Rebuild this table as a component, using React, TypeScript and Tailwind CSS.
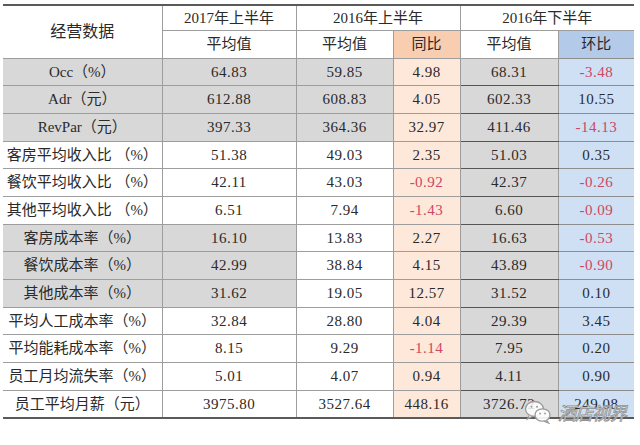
import React from 'react';

type Row = {
    label: string;
    v2017: string;
    v2016a: string;
    yoy: string;
    v2016b: string;
    qoq: string;
    shade: 'top' | 'mid' | 'none';
};

const rows: Row[] = [
    { label: 'Occ（%）', v2017: '64.83', v2016a: '59.85', yoy: '4.98', v2016b: '68.31', qoq: '-3.48', shade: 'top' },
    { label: 'Adr（元）', v2017: '612.88', v2016a: '608.83', yoy: '4.05', v2016b: '602.33', qoq: '10.55', shade: 'top' },
    { label: 'RevPar（元）', v2017: '397.33', v2016a: '364.36', yoy: '32.97', v2016b: '411.46', qoq: '-14.13', shade: 'top' },
    { label: '客房平均收入比 （%）', v2017: '51.38', v2016a: '49.03', yoy: '2.35', v2016b: '51.03', qoq: '0.35', shade: 'none' },
    { label: '餐饮平均收入比 （%）', v2017: '42.11', v2016a: '43.03', yoy: '-0.92', v2016b: '42.37', qoq: '-0.26', shade: 'none' },
    { label: '其他平均收入比 （%）', v2017: '6.51', v2016a: '7.94', yoy: '-1.43', v2016b: '6.60', qoq: '-0.09', shade: 'none' },
    { label: '客房成本率（%）', v2017: '16.10', v2016a: '13.83', yoy: '2.27', v2016b: '16.63', qoq: '-0.53', shade: 'mid' },
    { label: '餐饮成本率（%）', v2017: '42.99', v2016a: '38.84', yoy: '4.15', v2016b: '43.89', qoq: '-0.90', shade: 'mid' },
    { label: '其他成本率（%）', v2017: '31.62', v2016a: '19.05', yoy: '12.57', v2016b: '31.52', qoq: '0.10', shade: 'mid' },
    { label: '平均人工成本率（%）', v2017: '32.84', v2016a: '28.80', yoy: '4.04', v2016b: '29.39', qoq: '3.45', shade: 'none' },
    { label: '平均能耗成本率（%）', v2017: '8.15', v2016a: '9.29', yoy: '-1.14', v2016b: '7.95', qoq: '0.20', shade: 'none' },
    { label: '员工月均流失率（%）', v2017: '5.01', v2016a: '4.07', yoy: '0.94', v2016b: '4.11', qoq: '0.90', shade: 'none' },
    { label: '员工平均月薪（元）', v2017: '3975.80', v2016a: '3527.64', yoy: '448.16', v2016b: '3726.72', qoq: '249.08', shade: 'none' },
];

// negative deltas are shown in red
const Num: React.FC<{ value: string }> = ({ value }) => (
    <span className={`tracking-[0.5px] ${value.startsWith('-') ? 'text-[#cf4660]' : ''}`}>{value}</span>
);

const WechatMark: React.FC = () => (
    <div className="absolute left-[524px] top-[400px] flex items-center gap-[6px] pointer-events-none">
        <svg width="28" height="24" viewBox="0 0 28 24" fill="none" stroke="#9a9a9a" strokeWidth="1.3">
            <ellipse cx="10.5" cy="9" rx="9" ry="7.5" fill="rgba(255,255,255,0.85)" />
            <path d="M5 15.5 L3.5 19 L8.5 16.3" fill="rgba(255,255,255,0.85)" />
            <ellipse cx="18.5" cy="15" rx="7.5" ry="6.2" fill="rgba(255,255,255,0.9)" />
            <path d="M22.5 20.5 L24.5 23 L20 21.2" fill="rgba(255,255,255,0.9)" />
            <circle cx="7.5" cy="6.8" r="1" fill="#9a9a9a" stroke="none" />
            <circle cx="13" cy="6.8" r="1" fill="#9a9a9a" stroke="none" />
            <circle cx="16" cy="13.5" r="0.9" fill="#9a9a9a" stroke="none" />
            <circle cx="21" cy="13.5" r="0.9" fill="#9a9a9a" stroke="none" />
        </svg>
        <span className="text-[18px] leading-none tracking-[-1px] text-white/90 italic [-webkit-text-stroke:0.8px_#8e8e8e] font-['Noto_Sans_CJK_SC',sans-serif]">
            酒店视界
        </span>
    </div>
);

const App: React.FC = () => {
    const cell = 'border-r border-b border-[#9d9d9d] text-center align-middle p-0';
    const gray = 'bg-[#d8d8d8]';

    return (
        <div className="relative w-[640px] h-[445px] bg-white overflow-hidden font-['Liberation_Serif','Noto_Sans_CJK_SC',serif] text-[15px] text-[#2a2a2a]">
            <div className="pt-[4px] pl-[3px]">
                <table className="border-collapse table-fixed w-[631px] border-t-2 border-t-[#5a5a5a] border-b-2 border-b-[#5a5a5a]">
                    <colgroup>
                        <col className="w-[159px]" />
                        <col className="w-[134px]" />
                        <col className="w-[97px]" />
                        <col className="w-[67px]" />
                        <col className="w-[98px]" />
                        <col className="w-[76px]" />
                    </colgroup>
                    <thead>
                        <tr className="h-[25px]">
                            <th rowSpan={2} className={`${cell} font-normal text-[16px]`}>经营数据</th>
                            <th className={`${cell} font-normal`}>2017年上半年</th>
                            <th colSpan={2} className={`${cell} font-normal`}>2016年上半年</th>
                            <th colSpan={2} className="border-b border-[#9d9d9d] text-center font-normal p-0">2016年下半年</th>
                        </tr>
                        <tr className="h-[28px]">
                            <th className={`${cell} font-normal`}>平均值</th>
                            <th className={`${cell} font-normal`}>平均值</th>
                            <th className={`${cell} font-normal bg-[#f9cdb0]`}>同比</th>
                            <th className={`${cell} font-normal`}>平均值</th>
                            <th className="border-b border-[#8d8d8d] text-center font-normal p-0 bg-[#b3cbe8]">环比</th>
                        </tr>
                    </thead>
                    <tbody>
                        {rows.map(r => {
                            const shadeLeft = r.shade !== 'none' ? gray : '';
                            const shadeThird = r.shade === 'top' ? gray : '';
                            return (
                                <tr key={r.label} className="h-[27.7px]">
                                    <td className={`${cell} ${shadeLeft} whitespace-nowrap`}>{r.label}</td>
                                    <td className={`${cell} ${shadeLeft}`}><Num value={r.v2017} /></td>
                                    <td className={`${cell} ${shadeThird}`}><Num value={r.v2016a} /></td>
                                    <td className={`${cell} bg-[#fde8da]`}><Num value={r.yoy} /></td>
                                    <td className={`${cell} ${gray} border-b-[#555]`}><Num value={r.v2016b} /></td>
                                    <td className="border-b border-[#8d8d8d] text-center align-middle p-0 bg-[#cfe0f4]"><Num value={r.qoq} /></td>
                                </tr>
                            );
                        })}
                    </tbody>
                </table>
            </div>
            <WechatMark />
        </div>
    );
};

export default App;
